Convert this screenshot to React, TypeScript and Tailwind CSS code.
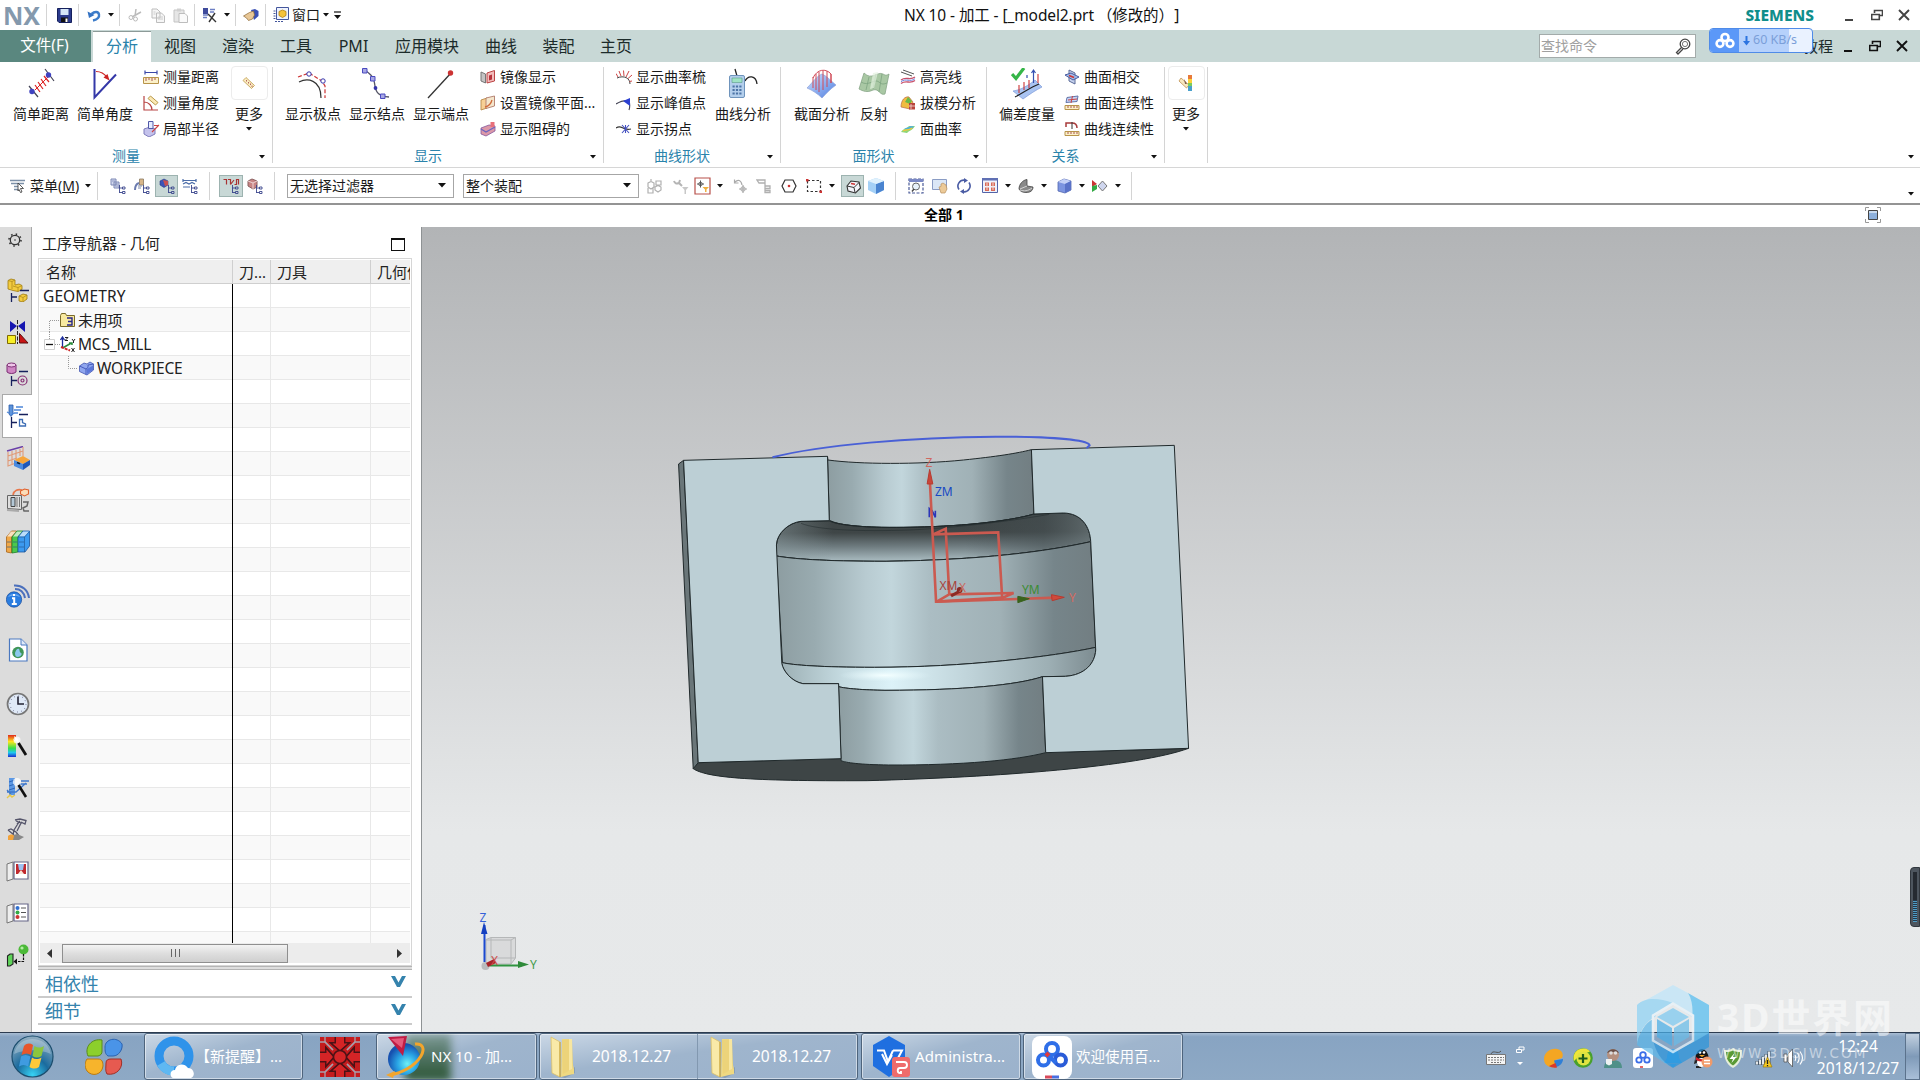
import type { ReactNode } from "react";

interface IconProps {
  w?: number;
  h?: number;
  box?: string;
  children: ReactNode;
}

const Svg = ({ w = 16, h = 16, box, children }: IconProps) => (
  <svg width={w} height={h} viewBox={box ?? `0 0 ${w} ${h}`} fill="none" className="shrink-0">
    {children}
  </svg>
);

const Caret = ({ className = "" }: { className?: string }) => (
  <svg width="6" height="4" viewBox="0 0 6 4" className={`shrink-0 ${className}`}>
    <path d="M0 0h6L3 3.5z" fill="#111" />
  </svg>
);

const Sep = ({ className = "" }: { className?: string }) => (
  <div className={`w-px shrink-0 bg-[#d4d4d4] ${className}`} />
);

/* ---------- title bar ---------- */

const Restore = ({ color }: { color: string }) => (
  <Svg w={12} h={12}>
    <path d="M3.5 4V1.5h8v5H9M3 1.5h9M.7 5.5h7.6v5H.7zM0 5.5h9" stroke={color} strokeWidth="1.6" />
  </Svg>
);

const Close = ({ color }: { color: string }) => (
  <Svg w={12} h={12}>
    <path d="M1 1l10 10M11 1L1 11" stroke={color} strokeWidth="1.9" />
  </Svg>
);

const TitleBar = () => (
  <div className="flex h-[30px] items-center bg-white">
    <div className="w-[46px] pl-[3px] text-[25px] font-bold leading-[34px] text-[#8499ad]">NX</div>
    <Sep className="h-[22px]" />
    <div className="ml-[10px] flex">
      <Svg w={15} h={15}>
        <path d="M.5 .5h14v14H2l-1.500-1.500z" fill="#2b3a8c" stroke="#15205c" />
        <path d="M3.500 1h8v6h-8z" fill="#d6e6f7" />
        <path d="M4 9.500h7V14H4z" fill="#111" />
        <path d="M8.500 10.500h2V14h-2z" fill="#fff" />
      </Svg>
    </div>
    <Sep className="ml-[6px] h-[22px]" />
    <div className="ml-[8px] flex">
      <Svg w={14} h={14}>
        <path d="M6 12.500c5-1 6.500-3.500 6-6C11.400 3.500 8 3 4.500 6" stroke="#3d7cc9" strokeWidth="2.400" />
        <path d="M.5 3.500L2 10l5.500-3z" fill="#3573c4" />
      </Svg>
    </div>
    <Caret className="ml-[7px]" />
    <Sep className="ml-[5px] h-[22px]" />
    <div className="ml-[8px] flex">
      <Svg w={14} h={14}>
        <path d="M8 1L7 8M13 4L4 9" stroke="#bbb" strokeWidth="1.500" />
        <circle cx="3" cy="9.500" r="2" stroke="#bbb" />
        <circle cx="7.500" cy="11" r="2" stroke="#bbb" />
      </Svg>
    </div>
    <div className="ml-[9px] flex">
      <Svg w={14} h={15}>
        <path d="M1 1h5l3 3v6H1zM5.500 5h5l3 3v6.500h-8z" fill="#f6f6f6" stroke="#bdbdbd" />
        <path d="M7 9h5M7 11h5M2.500 4h2M2.500 6h2" stroke="#ccc" />
      </Svg>
    </div>
    <div className="ml-[8px] flex">
      <Svg w={15} h={15}>
        <path d="M1 2h10v12H1z" fill="#e6e6e6" stroke="#c4c4c4" />
        <path d="M4 .5h4v3H4z" fill="#d0d0d0" />
        <path d="M6 5.500h6l2.500 2.500v6.500H6z" fill="#fafafa" stroke="#bdbdbd" />
      </Svg>
    </div>
    <Sep className="ml-[6px] h-[22px]" />
    <div className="ml-[7px] flex">
      <Svg w={16} h={16}>
        <path d="M1 1h5v6H1z" fill="#3f4b9c" />
        <path d="M1 8h5M1 10.500h4M8 2.500h5M8 5h4" stroke="#6d7fc4" strokeWidth="1.500" />
        <path d="M6 7l8 8M13 6l-6 9" stroke="#333" strokeWidth="1.400" />
      </Svg>
    </div>
    <Caret className="ml-[6px]" />
    <Sep className="ml-[5px] h-[22px]" />
    <div className="ml-[7px] flex">
      <Svg w={16} h={14}>
        <path d="M8 2l4-1 3.500 2v5L11 12z" fill="#3a50b4" />
        <path d="M.5 8l6-3.500 4-1.500 1 4-2 4-4 1.500-2-2.500z" fill="#e8c796" stroke="#8a6430" strokeWidth=".7" />
      </Svg>
    </div>
    <Sep className="ml-[6px] h-[22px]" />
    <div className="ml-[7px] flex">
      <Svg w={16} h={16}>
        <path d="M3.500.500h12v12h-12z" fill="#eef3ff" stroke="#44569c" />
        <path d="M.5 4h2M.5 6.500h2M.5 9h2M.5 11.500h2M2 14.500h9" stroke="#44569c" strokeDasharray="2 1" />
        <path d="M6 4.500l3.500-1.500 3.500 1.500v4L9.500 10.500 6 8.500z" fill="#f5c33b" stroke="#b37d0a" strokeWidth=".8" />
      </Svg>
    </div>
    <span className="ml-[3px] text-[14px] leading-[30px]">窗口</span>
    <Caret className="ml-[3px]" />
    <Svg w={16} h={10}>
      <path d="M5 2h7" stroke="#111" strokeWidth="1.200" />
      <path d="M5 5h7L8.500 9z" fill="#111" />
    </Svg>
    <div className="ml-[559px] w-[600px] whitespace-nowrap text-[15.5px] leading-[30px] tracking-[-0.1px] text-[#111]">
      NX 10 - 加工 - [_model2.prt<span className="pl-[3px] pr-[8px]">（修改的）</span>]
    </div>
    <div className="ml-auto flex items-center pr-[10px]">
      <span className="text-[15.5px] font-extrabold leading-[30px] text-[#0f8e8b]">SIEMENS</span>
      <div className="ml-[31px] mt-[10px] h-[2px] w-[8px] bg-[#444]" />
      <div className="ml-[18px] flex">
        <Restore color="#444" />
      </div>
      <div className="ml-[15px] flex">
        <Close color="#444" />
      </div>
    </div>
  </div>
);

/* ---------- tabs ---------- */

const tabs = [
  { label: "视图", cls: "w-[58px]" },
  { label: "渲染", cls: "w-[58px]" },
  { label: "工具", cls: "w-[58px]" },
  { label: "PMI", cls: "w-[57px]" },
  { label: "应用模块", cls: "w-[90px]" },
  { label: "曲线", cls: "w-[58px]" },
  { label: "装配", cls: "w-[57px]" },
  { label: "主页", cls: "w-[58px]" },
];

const Cloud = ({ size = 20, color = "#fff" }: { size?: number; color?: string }) => (
  <Svg w={size} h={size} box="0 0 20 20">
    <g stroke={color} strokeWidth="2.600">
      <circle cx="10" cy="6.500" r="3.500" />
      <circle cx="5" cy="12.500" r="3.400" />
      <circle cx="15" cy="12.500" r="3.400" />
    </g>
  </Svg>
);

const TabBar = () => (
  <div className="relative flex h-8 bg-[#c8d8d6] text-[16px] leading-[32px] text-[#1c2b2a]">
    <div className="w-[91px] bg-[#5a877f] pr-[2px] text-center text-[15.5px] leading-[30px] text-white">文件(F)</div>
    <div className="ml-[2px] mt-px w-[58px] border-t border-[#8c9a98] bg-white text-center leading-[29px] text-[#2a83ab]">分析</div>
    {tabs.map((t) => (
      <div key={t.label} className={`${t.cls} text-center`}>
        {t.label}
      </div>
    ))}
    <div className="ml-auto flex items-center pr-[12px]">
      <div className="flex h-6 w-[157px] items-center justify-between border border-[#a3abaa] bg-white pl-[1px] pr-1 text-[14px] text-[#a0a0a0]">
        查找命令
        <Svg w={16} h={17}>
          <circle cx="10" cy="6" r="4.800" stroke="#444" strokeWidth="1.300" />
          <circle cx="10" cy="6" r="2.600" stroke="#777" />
          <path d="M6.500 9.500l-5 5 1.500 1.500 5-5" stroke="#444" strokeWidth="1.300" />
        </Svg>
      </div>
      <span className="ml-[107px] text-[15px]">教程</span>
      <div className="ml-[11px] mt-[10px] h-[2px] w-[8px] bg-[#111]" />
      <div className="ml-[17px] flex">
        <Restore color="#111" />
      </div>
      <div className="ml-[15px] flex">
        <Close color="#111" />
      </div>
    </div>
    {/* floating download speed widget */}
    <div className="absolute right-[107px] top-[-2px] flex h-[25px] w-[104px] overflow-hidden rounded border border-[#4f8be8] bg-[#eaf2ff]">
      <div className="flex w-[29px] items-center justify-center bg-[#5b98f8]">
        <Cloud />
      </div>
      <div className="flex w-[50px] items-center bg-[#b6d1fb] pl-[4px]">
        <Svg w={7} h={10}>
          <path d="M3.500 0v6" stroke="#2c74e0" strokeWidth="2" />
          <path d="M0 5h7L3.500 9.500z" fill="#2c74e0" />
        </Svg>
        <span className="ml-[3px] whitespace-nowrap pb-[2px] text-[12.5px] leading-[20px] text-[#7b9fd9]">60 KB/s</span>
      </div>
    </div>
  </div>
);

/* ---------- ribbon icons ---------- */

const IDistance = (
  <Svg w={32} h={32}>
    <path d="M4 18l9 11M20 1l9 12" stroke="#445" strokeWidth="1.200" />
    <path d="M10 22L23 9" stroke="#d22" strokeWidth="1" />
    <path d="M10 17l5 7M13 14l5 7M16 11l5 7M19 8l5 6" stroke="#d22" strokeWidth="1.200" />
    <circle cx="7" cy="23.500" r="2.700" fill="#4043c0" />
    <circle cx="23.500" cy="7" r="2.700" fill="#4043c0" />
  </Svg>
);
const IAngle = (
  <Svg w={32} h={32}>
    <path d="M5.500 1v28.500L27 6.500" stroke="#3438a8" strokeWidth="2" />
    <path d="M7 3.500c5 0 9 3 11 6" stroke="#c22" strokeWidth="1.200" />
    <path d="M20.500 12.500l-6-3 4-3.500z" fill="#c22" />
  </Svg>
);
const IPole = (
  <Svg w={32} h={32}>
    <path d="M2 14c8-4 22-3 22 16" stroke="#333" strokeWidth="1.200" />
    <path d="M1 9L12 5l13 8 3 5v12" stroke="#c33" strokeWidth="1.200" strokeDasharray="4 2" />
    <circle cx="12" cy="6" r="2.200" fill="#fff" stroke="#33a" />
    <circle cx="26" cy="13" r="2.200" fill="#fff" stroke="#33a" />
  </Svg>
);
const IKnot = (
  <Svg w={32} h={32}>
    <path d="M3 2c8 4 10 8 11 16 1 7 4 10 14 11" stroke="#556" strokeWidth="1.300" />
    <g stroke="#4a4ac0" fill="#a8a8e4">
      <path d="M1.500 .5h4.500v4.500H1.500zM9.500 8.500h4.500v4.500H9.500zM19.500 26h4.500v4.500h-4.500z" />
    </g>
    <circle cx="14.500" cy="20" r="1.900" fill="#33a" />
  </Svg>
);
const IEnd = (
  <Svg w={32} h={32}>
    <path d="M3 30L26 5" stroke="#333" strokeWidth="1.300" />
    <circle cx="25.500" cy="5" r="2.700" fill="#c33" />
  </Svg>
);
const ICalc = (
  <Svg w={32} h={32}>
    <path d="M10 8L8 1M18 13c3-6 11-6 12 3" stroke="#222" strokeWidth="1.300" />
    <rect x="2.500" y="7.500" width="15" height="22" rx="1.500" fill="#b4cfec" stroke="#6f94bc" />
    <path d="M5 10h10v4.500H5z" fill="#a0e4c4" stroke="#5a9a8a" strokeWidth=".6" />
    <path d="M5.500 18.500h9M5.500 22h9M5.500 25.500h9" stroke="#4c74a6" strokeWidth="1.800" strokeDasharray="2.200 1.200" />
  </Svg>
);
const ISection = (
  <Svg w={32} h={32}>
    <defs>
      <linearGradient id="sec" x1="0" y1="0" x2="1" y2="1">
        <stop offset="0" stopColor="#cfe0ff" />
        <stop offset="1" stopColor="#4f7ee0" />
      </linearGradient>
    </defs>
    <path d="M1 20C7 14 11 8 16 6c5 2 10 8 14 11-6 4-10 9-14 13-4-4-10-8-15-10z" fill="url(#sec)" stroke="#8ea2d8" strokeWidth=".7" />
    <path d="M7 20V9M10 22V6M13 24V4M17 22V3M21 19V3M25 15V6M7 10C11 1 20 0 25 6v9" stroke="#d04a58" strokeWidth="1" />
  </Svg>
);
const IReflect = (
  <Svg w={32} h={30}>
    <path d="M1 20L6 4c8 8 13-2 19 1 2 1 3 2 6 0l-4 20c-5 2-6-6-12-4-6 3-10 1-14-1z" fill="#a9c8a4" stroke="#88a688" strokeWidth=".8" />
    <path d="M3 13c8 5 13-4 18 0 3 3 5 2 8 1M11 8L8 21M18 5l-3 15M24 5l-3 18" stroke="#7ea482" strokeWidth=".8" />
    <path d="M15 4l5-1-4 16-4 1z" fill="#e4f2e0" opacity=".7" />
  </Svg>
);
const IDeviation = (
  <Svg w={32} h={32}>
    <path d="M2 23c8-1 16-6 22-11l7 7c-6 3-12 7-19 12z" fill="#a9c4f2" stroke="#7d99d8" strokeWidth=".7" />
    <path d="M4 29c8-4 16-10 24-13" stroke="#222" strokeWidth="1.200" />
    <path d="M8 17v8M13 14v8M18 12v8M27 6v9" stroke="#c33" strokeWidth="1.100" />
    <path d="M22.500 15V2M16 10V7M20.500 5l2-3 2 3" stroke="#3550b0" strokeWidth="1.200" />
    <path d="M1 6l4 4.500L13 0" stroke="#35b648" strokeWidth="3.200" />
  </Svg>
);
const IRuler = (
  <Svg w={14} h={14}>
    <path d="M4 1.500l8.500 8-3 3L1 4.500z" fill="#fbecc0" stroke="#c4a45a" strokeWidth=".9" />
    <path d="M4.500 4v1.500M6.500 6v1.500M8.500 7.500V9M10 9.500V11" stroke="#a55" strokeWidth=".9" />
  </Svg>
);
const IRulerColor = (
  <Svg w={16} h={18}>
    <path d="M3 4l8 7-2.500 3L1 7z" fill="#f8e8c0" stroke="#c09050" strokeWidth=".8" />
    <path d="M10 1h4v4h-4z" fill="#e87a3a" />
    <path d="M10 5h4v4h-4z" fill="#fcd23a" />
    <path d="M10 9h4v3h-4z" fill="#7ccc5c" />
    <path d="M10 12h4v5h-4z" fill="#48a0cc" />
    <path d="M6 5l3 5-2 0z" fill="#7a5a48" />
  </Svg>
);

const SRulerH = (
  <Svg>
    <path d="M2 1.500v4M14 1.500v4M2 3.500h12" stroke="#3a48a8" strokeWidth="1.200" />
    <path d="M.5 8.500h15v6H.5z" fill="#fbf0c8" stroke="#b8944a" />
    <path d="M3 9v3M6 9v2M9 9v3M12 9v2" stroke="#a55" />
  </Svg>
);
const SRulerA = (
  <Svg>
    <path d="M1 1v14h14M1 7c5 0 8 4 8 8" stroke="#b84444" strokeWidth="1.200" />
    <path d="M7.500 1l7.500 6.500-2.500 2.500L5 3.500z" fill="#fbe8b4" stroke="#b8984a" />
  </Svg>
);
const SRadius = (
  <Svg w={17}>
    <path d="M1 8l6-2 5 2v5l-6 3-5-3z" fill="#c4c2ec" stroke="#7f7cbc" />
    <path d="M5.500 .5h4.500v7H5.500z" fill="#e6ecff" stroke="#5058a8" />
    <path d="M16 4L9 11M11 4.500h5" stroke="#c44" strokeWidth="1.100" />
  </Svg>
);
const SMirror = (
  <Svg>
    <path d="M1 3l4.500 2v9L1 12z" fill="#c4c4c4" stroke="#777" />
    <path d="M7 4l7.500-2.500v10.500L7 14z" fill="#f3bcbc" stroke="#b44" />
    <path d="M9 6.500l3-1v5l-3 1z" fill="#b8343c" />
  </Svg>
);
const SPlane = (
  <Svg>
    <path d="M1 5l6-2v10l-6 2z" fill="#f7cf94" stroke="#b88a4a" strokeWidth=".9" />
    <path d="M6 3l8.500-2v10L6 13.500z" fill="#f4e6cc" stroke="#b07a6a" strokeWidth=".9" />
    <path d="M5 12c4-1 6-3 7-7" stroke="#d06a3a" strokeWidth="1.300" />
  </Svg>
);
const SBlock = (
  <Svg>
    <path d="M1 7l8-3 6 1v5l-9 5-5-2z" fill="#dc98a8" stroke="#84589c" strokeWidth=".8" />
    <path d="M1 8l5 3 9-5" stroke="#6a64c0" strokeWidth="1.300" />
    <path d="M10.500 1h4v5h-4z" fill="#e8707a" />
  </Svg>
);
const SComb = (
  <Svg>
    <path d="M1 9c7-3 13 0 13 6" stroke="#444" />
    <path d="M2 8L0 4.500M5 7L3 2M8 7L7.500 1.500M10 8l3-6M12 9.500l4-3.500M13.500 12.500L16 12" stroke="#c44" />
  </Svg>
);
const SPeak = (
  <Svg>
    <path d="M0 9c5-3 9-4 13-3 1 3 1 6 0 9" stroke="#445" strokeWidth="1.100" />
    <path d="M7 6l7-3v8z" fill="#2b3fd0" />
  </Svg>
);
const SInflect = (
  <Svg>
    <path d="M0 7c6-4 6 3 15 1" stroke="#333" strokeWidth="1.200" />
    <path d="M6 4l7 8M13 4l-7 8M9.500 4v8" stroke="#4450c0" strokeWidth="1.100" />
  </Svg>
);
const SHighlight = (
  <Svg>
    <path d="M3 1l11 4M1 3l11 4" stroke="#555" />
    <path d="M1 11c5-4 9 1 14-3M1 14.500c5-4 9 1 14-3" stroke="#c8506a" strokeWidth="1.300" />
    <path d="M1 12.700c5-4 9 1 14-3" stroke="#6a80dc" />
  </Svg>
);
const SDraft = (
  <Svg>
    <path d="M1 12C1 5 5 1 9 2l4 5-3 7z" fill="#f0bc40" stroke="#b86a4a" strokeWidth=".7" />
    <path d="M8 2l4 4-2 3-5-2z" fill="#6ab84a" />
    <path d="M9 8h6v6.500H9z" fill="#b8443c" />
    <path d="M11 9v5M9 11h6" stroke="#f4dcd4" strokeWidth=".8" />
  </Svg>
);
const SCurv = (
  <Svg>
    <path d="M1 11c3-4 5-3 8-6l6 0c-3 5-5 4-8 7z" fill="#8cd67a" />
    <path d="M4 8c3-2 4-1 7-3l3 .500-3 2.500z" fill="#52b0d8" />
    <path d="M3 10c4-2 5 0 9-3" stroke="#f2c83c" strokeWidth="1.300" />
  </Svg>
);
const SIntersect = (
  <Svg>
    <path d="M5 1l6 3v11l-6-3z" fill="#c7d3ee" stroke="#5a6a98" />
    <path d="M1 6l6-2 8 4-6 3z" fill="#9ab8ea" fillOpacity=".8" stroke="#4a5ca0" />
    <path d="M5 6.500l5 2" stroke="#c33" strokeWidth="1.500" />
  </Svg>
);
const SCont = (
  <Svg>
    <path d="M3 2.500L14 1l-1 5.500-11 1z" fill="#c4d4f6" stroke="#6474a8" />
    <path d="M8.500 1L7 8M4 5l9-1" stroke="#c44" />
    <path d="M1 10.500h14v4H1z" fill="#fbf0c8" stroke="#b8944a" />
    <path d="M4 11v2M7 11v2M10 11v2M13 11v2" stroke="#a55" />
  </Svg>
);
const SCurveCont = (
  <Svg>
    <path d="M2 6V2h6M8 2c4 0 5 2 5 5" stroke="#a83a3a" strokeWidth="1.500" />
    <path d="M8 1v7" stroke="#333" />
    <path d="M1 10.500h14v4H1z" fill="#fbf0c8" stroke="#b8944a" />
    <path d="M4 11v2M7 11v2M10 11v2M13 11v2" stroke="#a55" />
  </Svg>
);

/* ---------- ribbon ---------- */

const Big = ({ icon, label, cls = "w-16" }: { icon: ReactNode; label: string; cls?: string }) => (
  <div className={`${cls} flex shrink-0 flex-col items-center pt-[5px]`}>
    <div className="flex h-[33px] items-center">{icon}</div>
    <span className="mt-1 whitespace-nowrap leading-5">{label}</span>
  </div>
);

const SmallList = ({ items, cls }: { items: [ReactNode, string][]; cls: string }) => (
  <div className={`${cls} flex shrink-0 flex-col pt-px`}>
    {items.map(([icon, label]) => (
      <div key={label} className="flex h-[26px] items-center gap-1 whitespace-nowrap">
        <div className="flex w-4 justify-center pt-px">{icon}</div>
        {label}
      </div>
    ))}
  </div>
);

const More = ({ icon, cls }: { icon: ReactNode; cls: string }) => (
  <div className={`${cls} flex shrink-0 flex-col items-center pt-[4px]`}>
    <div className="flex h-[34px] w-[37px] items-center justify-center rounded-sm border border-[#ececec]">{icon}</div>
    <span className="mt-[4px] leading-5">更多</span>
    <Caret className="mt-[3px]" />
  </div>
);

const Group = ({ title, cls, children }: { title?: string; cls: string; children: ReactNode }) => (
  <div className={`${cls} flex shrink-0`}>
    <div className="flex min-w-0 flex-1 flex-col">
      <div className="flex h-[84px]">{children}</div>
      {title && (
        <div className="flex h-[22px] items-center">
          <span className="flex-1 text-center leading-[24px] text-[#2a83ab]">{title}</span>
          <div className="flex w-5 justify-center pt-0.5">
            <Caret />
          </div>
        </div>
      )}
    </div>
    <Sep className="mt-[5px] h-24" />
  </div>
);

const Ribbon = () => (
  <div className="flex h-[106px] border-b border-[#d6d6d6] bg-white text-[14px] text-[#1a1a1a]">
    <Group title="测量" cls="w-[273px]">
      <div className="w-[9px] shrink-0" />
      <Big icon={IDistance} label="简单距离" />
      <Big icon={IAngle} label="简单角度" />
      <SmallList
        cls="w-[93px] pl-1.5"
        items={[
          [SRulerH, "测量距离"],
          [SRulerA, "测量角度"],
          [SRadius, "局部半径"],
        ]}
      />
      <More icon={IRuler} cls="w-[38px]" />
    </Group>
    <Group title="显示" cls="w-[331px]">
      <div className="w-2 shrink-0" />
      <Big icon={IPole} label="显示极点" />
      <Big icon={IKnot} label="显示结点" />
      <Big icon={IEnd} label="显示端点" />
      <SmallList
        cls="pl-[7px]"
        items={[
          [SMirror, "镜像显示"],
          [SPlane, "设置镜像平面..."],
          [SBlock, "显示阻碍的"],
        ]}
      />
    </Group>
    <Group title="曲线形状" cls="w-[177px]">
      <SmallList
        cls="w-[107px] pl-[12px]"
        items={[
          [SComb, "显示曲率梳"],
          [SPeak, "显示峰值点"],
          [SInflect, "显示拐点"],
        ]}
      />
      <Big icon={ICalc} label="曲线分析" />
    </Group>
    <Group title="面形状" cls="w-[206px]">
      <div className="w-[9px] shrink-0" />
      <Big icon={ISection} label="截面分析" />
      <Big icon={IReflect} label="反射" cls="w-10" />
      <SmallList
        cls="pl-1.5"
        items={[
          [SHighlight, "高亮线"],
          [SDraft, "拔模分析"],
          [SCurv, "面曲率"],
        ]}
      />
    </Group>
    <Group title="关系" cls="w-[178px]">
      <div className="w-2 shrink-0" />
      <Big icon={IDeviation} label="偏差度量" />
      <SmallList
        cls="pl-[5px]"
        items={[
          [SIntersect, "曲面相交"],
          [SCont, "曲面连续性"],
          [SCurveCont, "曲线连续性"],
        ]}
      />
    </Group>
    <Group cls="w-[43px]">
      <More icon={IRulerColor} cls="w-[42px]" />
    </Group>
    <div className="flex flex-1 items-end justify-end pb-[8px] pr-[6px]">
      <Caret />
    </div>
  </div>
);

/* ---------- selection toolbar ---------- */

const Tree = () => (
  <path
    d="M10.500 8v8M10.500 11h3M10.500 15.500h3M13.500 10h2.500v2h-2.500zM13.500 14.500h2.500v2h-2.500z"
    stroke="#3a458c"
    strokeWidth=".9"
  />
);

const Tool = ({ cls, active, children }: { cls: string; active?: boolean; children: ReactNode }) => (
  <div
    className={`${cls} flex h-[22px] shrink-0 items-center justify-center ${active ? "border border-[#9db3b0] bg-[#c8d8d6]" : ""}`}
  >
    {children}
  </div>
);

const Combo = ({ cls, label }: { cls: string; label: string }) => (
  <div className={`${cls} flex h-[24px] shrink-0 items-center justify-between border border-[#a6a6a6] bg-white pl-[2px] pr-[7px]`}>
    {label}
    <svg width="8" height="5" viewBox="0 0 8 5">
      <path d="M0 0h8L4 4.500z" fill="#111" />
    </svg>
  </div>
);

const Toolbar = () => (
  <div className="flex h-[37px] items-center border-b-2 border-[#949494] bg-white text-[14px] text-[#1a1a1a]">
    <div className="ml-[10px] flex">
      <Svg>
        <path d="M0 2.500h15M1 5.500h13M4 8.500h7M4 11.500h5" stroke="#7c90a8" strokeWidth="1.600" />
        <path d="M8 5l5.500 5.500h-3l1.500 3.500-1.500.5L9 11.500 8 13z" fill="#fff" stroke="#333" strokeWidth=".8" />
      </Svg>
    </div>
    <span className="ml-[4px] w-[53px] whitespace-nowrap">
      菜单(<u>M</u>)
    </span>
    <Caret className="ml-[2px]" />
    <Sep className="ml-[6px] h-7" />
    <Tool cls="ml-[8px] w-6">
      <Svg w={18} h={18}>
        <path d="M2 2h5v6H2zM5 5h5v6H5z" fill="#d2d8ee" stroke="#7c88b4" />
        <path d="M3 4h3M6 7h3M6 9h3" stroke="#7c88b4" strokeWidth=".8" />
        <Tree />
      </Svg>
    </Tool>
    <Tool cls="w-6">
      <Svg w={18} h={18}>
        <path d="M2 13c0-4 1-6 4-7" stroke="#6c7cb0" strokeWidth="2" />
        <path d="M6.500 2h4v6h-4z" fill="#d8b68a" stroke="#8a7860" strokeWidth=".8" />
        <path d="M5 9h4M5 11h3" stroke="#7a86a8" />
        <Tree />
      </Svg>
    </Tool>
    <Tool active cls="ml-px w-[23px]">
      <Svg w={18} h={18}>
        <path d="M2 4l4-2 4 2v4l-4 2.500L2 8z" fill="#3c54b8" stroke="#2a3880" strokeWidth=".6" />
        <path d="M5 3l5 1v4l-3 1z" fill="#c85050" />
        <Tree />
      </Svg>
    </Tool>
    <Tool cls="w-6">
      <Svg w={18} h={18}>
        <path d="M2 2v3M15 2v3M2 3.500h13M2 7l3-1.500L8 7l3-1.500L14 7M2 10h7" stroke="#4a6ca8" strokeWidth="1.200" />
        <Tree />
      </Svg>
    </Tool>
    <Sep className="ml-[7px] h-7" />
    <Tool active cls="ml-[9px] w-[24px]">
      <Svg w={18} h={18}>
        <path d="M1.500 2.500h3v5M6 2.500h2.500v5M8.500 7.500L12 3M12.500 7.500h2v-5h2v5" stroke="#a83232" strokeWidth="1.200" />
        <Tree />
      </Svg>
    </Tool>
    <Tool cls="w-6">
      <Svg w={18} h={18}>
        <path d="M2 4l4-2 5 2v6l-4 2-5-3z" fill="#c88484" stroke="#8a6060" />
        <path d="M2 4l5 2 4-2M7 6v6" stroke="#eed4d4" />
        <Tree />
      </Svg>
    </Tool>
    <Sep className="ml-[7px] h-7" />
    <Combo cls="ml-[12px] w-[167px]" label="无选择过滤器" />
    <Combo cls="ml-[9px] w-[176px]" label="整个装配" />
    <Tool cls="ml-[6px] w-[20px]">
      <Svg w={18} h={16}>
        <path d="M2 5l3-1.500L8 5v4L5 11 2 9zM2 10v5h5v-5M5 3.500V1M10 3h5v4h-5zM9 9l3-1.500L15 9v3l-3 2-3-2z" stroke="#b0b0b0" strokeWidth="1.200" />
      </Svg>
    </Tool>
    <Tool cls="ml-[6px] w-[20px]">
      <Svg w={16} h={16}>
        <path d="M1 3c1 3 3 3 5 2l3 3M6 5l1-3" stroke="#b4b4b4" strokeWidth="2" />
        <path d="M9 9h6.500l-2.500 3v4h-1.500v-4z" fill="#c8c8c8" />
      </Svg>
    </Tool>
    <Tool cls="ml-[3px] w-[17px]">
      <Svg w={17} h={18}>
        <path d="M1 1h15v16H1z" stroke="#b8504a" strokeWidth="1.200" />
        <path d="M3 7h7M6.500 3.500v7" stroke="#555" />
        <circle cx="6.500" cy="7" r="1.800" stroke="#555" strokeWidth=".8" />
        <path d="M8.500 10h6.500l-2.500 2.500v2.500h-1.500v-2.500z" fill="#f0b040" />
      </Svg>
    </Tool>
    <Caret className="ml-[6px]" />
    <Tool cls="ml-[8px] w-[20px]">
      <Svg w={16} h={16}>
        <path d="M2 4c3-3 6-2 7 3M1.500 1.500v3.500h4M10 7v8M6 11h8" stroke="#a9a9a9" strokeWidth="1.200" />
        <circle cx="10" cy="11" r="2.200" stroke="#a9a9a9" />
      </Svg>
    </Tool>
    <Tool cls="ml-[3px] w-[20px]">
      <Svg w={16} h={16}>
        <path d="M1 2h8v3H3zM9 5v10M9 8h5v2.500H9zM9 12.500h5v2H9z" stroke="#b0b0b0" strokeWidth="1.300" />
      </Svg>
    </Tool>
    <Tool cls="ml-[6px] w-[18px]">
      <Svg w={16} h={14}>
        <path d="M4 1h8l3 6-3 6H4L1 7z" stroke="#333" strokeWidth="1.200" />
        <circle cx="8" cy="7" r="1.300" fill="#c33" />
      </Svg>
    </Tool>
    <Tool cls="ml-[7px] w-[18px]">
      <Svg w={16} h={14}>
        <path d="M1.500 1.500h13v11h-13z" stroke="#333" strokeWidth="1.200" strokeDasharray="2.500 2" />
        <path d="M0 0h2.500v2.500H0zM13.500 11.500h2.500V14h-2.500z" fill="#c33" />
      </Svg>
    </Tool>
    <Caret className="ml-[6px]" />
    <Tool active cls="ml-[6px] w-[23px]">
      <Svg w={18} h={18}>
        <path d="M3 9l4-5 8 1 1.500 6-5 5L4 14z" fill="#f4f4fa" stroke="#333" strokeWidth="1.100" />
        <path d="M3 9l7 1.500 5-5M10 10.500l1 5" stroke="#333" />
        <path d="M7 6.500l4 .8" stroke="#c33" strokeWidth="1.500" />
      </Svg>
    </Tool>
    <Tool cls="ml-[2px] w-[20px]">
      <Svg w={16} h={17}>
        <path d="M0 4l8-3 8 3v9l-8 4-8-4z" fill="#a4d0f6" />
        <path d="M8 7l8-3v9l-8 4z" fill="#4a84d0" />
        <path d="M0 4l8-3 8 3-8 3z" fill="#e0f1fc" />
      </Svg>
    </Tool>
    <Sep className="ml-[9px] h-7" />
    <Tool cls="ml-[11px] w-[18px]">
      <Svg w={16} h={16}>
        <path d="M1 1h14v14H1z" stroke="#4a5a98" strokeDasharray="3 1.500" strokeWidth="1.200" />
        <path d="M1 1h14v3H1z" fill="#7a88c4" />
        <circle cx="8" cy="8.500" r="3.500" fill="#e8f2fa" stroke="#666" />
        <path d="M4 13.500l2-2.500" stroke="#444" strokeWidth="1.400" />
      </Svg>
    </Tool>
    <Tool cls="ml-[6px] w-[18px]">
      <Svg w={16} h={16}>
        <path d="M.5 1.500h14v10H.5z" fill="#dbe7f6" stroke="#8a9cc4" />
        <path d="M7 9l2-.500V6l2-1 3 2 1 4-2 4-4 0z" fill="#ecca98" stroke="#b89060" strokeWidth=".7" />
      </Svg>
    </Tool>
    <Tool cls="ml-[6px] w-[18px]">
      <Svg w={16} h={16}>
        <path d="M3 11.500A6 6 0 019 2.200M13 4.500A6 6 0 017 13.800" stroke="#4a5ca4" strokeWidth="1.600" />
        <path d="M8 0l4 2.500-4 2.500zM8 11l-4 2.500 4 2.500z" fill="#4a5ca4" />
      </Svg>
    </Tool>
    <Tool cls="ml-[8px] w-[18px]">
      <Svg w={16} h={15}>
        <path d="M.5.5h15v14H.5z" fill="#eef2fc" stroke="#5464a8" />
        <path d="M0 0h16v2.500H0z" fill="#6070b4" />
        <path d="M3 4.500h4v3.500H3zM9 4.500h4v3.500H9zM3 9.500h4V13H3zM9 9.500h4V13H9z" fill="#d86a58" />
        <path d="M5 5v7M11 5v7" stroke="#f4dcd4" />
      </Svg>
    </Tool>
    <Caret className="ml-[6px]" />
    <Tool cls="ml-[6px] w-[18px]">
      <Svg w={16} h={16}>
        <path d="M1 11c0-5 4-9 8-9.500V8l6 1c0 4-3 5.500-7 5.500S2 13 1 11z" fill="#8a8a8a" stroke="#444" strokeWidth=".8" />
        <path d="M2 12c4 1.500 8 1 12-2M9 8l-7 3" stroke="#ddd" strokeWidth=".9" />
      </Svg>
    </Tool>
    <Caret className="ml-[6px]" />
    <Tool cls="ml-[8px] w-[18px]">
      <Svg w={15} h={16}>
        <path d="M1 4l6-3 7 2v9l-6 3-7-2z" fill="#7c94e0" stroke="#5468b0" strokeWidth=".8" />
        <path d="M1 4l6-3 7 2-6 3z" fill="#c4d0f6" />
        <path d="M8 6l6-3v9l-6 3z" fill="#5a72c8" />
      </Svg>
    </Tool>
    <Caret className="ml-[6px]" />
    <Tool cls="ml-[4px] w-[20px]">
      <Svg w={17} h={14}>
        <path d="M1 1l5 4-5 3z" fill="#c33" />
        <path d="M1 7l5-1v4l-5 3z" fill="#3a4" />
        <path d="M7 7l4.500-5 4.500 5-4.500 5z" fill="#cfd6ee" stroke="#777" />
      </Svg>
    </Tool>
    <Caret className="ml-[6px]" />
    <Sep className="ml-[10px] h-7" />
    <div className="flex flex-1 items-end justify-end self-stretch pb-[7px] pr-[6px]">
      <Caret />
    </div>
  </div>
);

const PartBar = () => (
  <div className="flex h-[22px] bg-white">
    <div className="flex-1 pl-[924px] text-[14px] font-bold leading-[20px] text-black">全部 1</div>
    <div className="mr-[39px] mt-[2px] flex">
      <Svg>
        <path d="M.5 4V.5H4M12 .5h3.500V4M15.500 12v3.500H12M4 15.500H.5V12" stroke="#999" />
        <path d="M3.500 3.500h9v9h-9z" fill="#8db0dc" stroke="#444" />
        <path d="M4 5h8" stroke="#dde8f6" strokeWidth="1.500" />
      </Svg>
    </div>
  </div>
);

/* ---------- resource bar ---------- */

const sideIcons: { id: string; gap?: string; active?: boolean; art: ReactNode }[] = [
  {
    id: "assembly",
    art: (
      <>
        <path d="M2 2.500L5 1l4 1v5l4-1 3 1.500v4L12 13.500l-5-1-5-1.500z" fill="#f3cc3f" stroke="#9d7a10" strokeWidth=".8" />
        <path d="M2 2.500l4 1L9 2M6 3.500V11M7 8l5 1.500 4-2M12 9.500v4" stroke="#b08c1c" strokeWidth=".8" />
        <path d="M5.500 15v9M6 19h5M14 12.500h9" stroke="#16205c" strokeWidth="1.300" />
        <path d="M13 18l4-2 4 1v4l-4 3-4-1z" fill="#f3cc3f" stroke="#9d7a10" strokeWidth=".8" />
        <path d="M13 18l4 1.500 4-2.500M17 19.500V24" stroke="#b08c1c" strokeWidth=".8" />
      </>
    ),
  },
  {
    id: "constraint",
    art: (
      <>
        <path d="M4 1l7 5-7 6zM19 1l-7 5 7 6z" fill="#1616b0" />
        <path d="M11.500 0v24" stroke="#222" strokeDasharray="4 1.500" />
        <path d="M1.500 15.500h8v8h-8z" fill="#f7ef27" stroke="#806a00" />
        <path d="M13.500 13.500l8.500 9.500h-8.500z" fill="#c81414" stroke="#5a0d0d" />
      </>
    ),
  },
  {
    id: "part",
    art: (
      <>
        <path d="M1 3v7c2 2 7 2 9 0V3" fill="#cf86c4" stroke="#7d2f74" />
        <ellipse cx="5.500" cy="3" rx="4.500" ry="2" fill="#eec5e8" stroke="#7d2f74" />
        <path d="M5.500 14v10M6 18.500h5M13 9.500h9" stroke="#16205c" strokeWidth="1.300" />
        <circle cx="16.500" cy="18.500" r="4.500" stroke="#862f74" strokeWidth="1.200" />
        <circle cx="16.500" cy="18.500" r="1.500" stroke="#862f74" strokeWidth="1.200" />
      </>
    ),
  },
  {
    id: "operation",
    active: true,
    art: (
      <>
        <path d="M3 1h4v9l-2 2.500L3 10z" fill="#5c94dc" stroke="#2b5aa8" strokeWidth=".8" />
        <path d="M1 8l2 1M10 3h7M8 6h7M8 9l-3 2M8 9h4" stroke="#4d86d8" strokeWidth="1.300" />
        <path d="M5.500 13v11M6 18.500h5M13 10.500h9" stroke="#16205c" strokeWidth="1.300" />
        <path d="M13.500 15.500h3v3l3 1.500v2h-6z" stroke="#3c6cb4" strokeWidth="1.300" />
      </>
    ),
  },
  {
    id: "tool",
    art: (
      <>
        <path d="M1 5l16-4.500" stroke="#6a3fa8" strokeWidth="1.500" />
        <path d="M2 6v14l8-3M6 5v13M10 4v9M14 3v7M17 1v9M2 10l15-5M2 15l9-3" stroke="#e09a78" strokeWidth="1.100" />
        <path d="M8 14l9-4 7 4-7 4z" fill="#f6a53c" />
        <path d="M8 14l9 4v6l-9-4z" fill="#4a8ae0" />
        <path d="M17 18l7-4v5l-7 5z" fill="#2058b8" />
        <path d="M11 16.500l3 1.300" stroke="#123" strokeWidth="1.500" />
      </>
    ),
  },
  {
    id: "machine",
    art: (
      <>
        <path d="M7 7c1-5 5-6 9-5" stroke="#e8774a" strokeWidth="1.700" />
        <path d="M14.500 3l4-2 4 1v4l-4 2-4-2z" fill="#fbdcb8" stroke="#e0602a" strokeWidth="1.100" />
        <path d="M1.500 7.500h14v14l-14-1z" fill="#dedede" stroke="#666" />
        <path d="M5 9.500h4v9H5z" fill="#b4c8d6" stroke="#444" />
        <path d="M11 9v10M13.500 9v10" stroke="#777" />
        <path d="M17 14h5l-1 4-4 2 1 3h5" stroke="#666" strokeWidth="1.500" />
        <path d="M1 22l12 1" stroke="#aaa" strokeWidth="2" />
      </>
    ),
  },
  {
    id: "library",
    art: (
      <>
        <path d="M.5 7l5-6 5 0-5 6v16l-5-1z" fill="#f0a848" stroke="#a8641a" strokeWidth=".8" />
        <path d="M6 7l5-6 6 0-5 6v15l-6 1z" fill="#4cc84c" stroke="#1c7d2a" strokeWidth=".8" />
        <path d="M12 7l5-6 6.500 0v15L19 22l-7 0z" fill="#3c9af0" stroke="#1b559e" strokeWidth=".8" />
        <path d="M1 6.500l4-5h5l-4.500 5zM7 6.500l4-5h5l-4.500 5zM13 6.500l4-5h6l-4.500 5z" fill="#fff" opacity=".65" />
        <path d="M12 7h6.500L23 2M18.500 7v15M13 12h5M13 17h5M1 12h4M7 12h4M7 17h4M1 17h4" stroke="#1f4f88" strokeWidth=".6" />
      </>
    ),
  },
  {
    id: "web",
    gap: "mt-[12px]",
    art: (
      <>
        <path d="M9 5c6 0 9 4 10 9M8 1.500C16 1 22 6 23 14" stroke="#4c70bc" strokeWidth="2" />
        <circle cx="8" cy="15.500" r="7.700" fill="#2a7de0" stroke="#174a9c" strokeWidth=".7" />
        <path d="M2 13a6.500 5 0 0112 0c-4-2-8-2-12 0z" fill="#9cc8f8" opacity=".6" />
        <path d="M8 10v2M6 14.200h2.200v5M5.800 20h5" stroke="#fff" strokeWidth="2" />
      </>
    ),
  },
  {
    id: "page",
    gap: "mt-[12px]",
    art: (
      <>
        <path d="M3.500 1h11.500l6 6v16H3.500z" fill="#fff" stroke="#4a78c0" strokeWidth="1.200" />
        <path d="M15 1v6h6" fill="#dfe9f8" stroke="#4a78c0" />
        <circle cx="12" cy="14.500" r="5.800" fill="#3f9558" />
        <path d="M9 15c1-4 3-5 4-4s0 3 2 4-1 4-3 4-3-1-3-4z" fill="#8cc8ee" />
      </>
    ),
  },
  {
    id: "history",
    gap: "mt-[12px]",
    art: (
      <>
        <circle cx="12" cy="12" r="10.500" fill="#dfe9f7" stroke="#777" strokeWidth="1.700" />
        <circle cx="12" cy="12" r="8" stroke="#557" strokeDasharray=".8 3.400" />
        <path d="M12 4.500V12h6" stroke="#223" strokeWidth="1.600" />
      </>
    ),
  },
  {
    id: "color",
    art: (
      <>
        <path d="M2 1h8v22H2z" fill="url(#rainbow)" />
        <path d="M7 5l3 4-2-7 4 3 1 4z" fill="#fff" />
        <circle cx="11" cy="6" r="3.500" fill="#fff" opacity=".7" />
        <path d="M12.500 9l7.500 12" stroke="#111" strokeWidth="2.800" />
      </>
    ),
  },
  {
    id: "wizard",
    art: (
      <>
        <path d="M3 2h6v17H3z" fill="#5c98e4" />
        <path d="M3 6l6-2M3 10l6-2M3 14l6-2" stroke="#2f66b8" />
        <path d="M1 16h9l10-9M15 5h8M13 8h8M1 14l4 4" stroke="#3f78cc" strokeWidth="1.300" />
        <path d="M1 22l3-3 2 2 3-2" stroke="#e8c84a" strokeWidth="1.400" />
        <circle cx="11" cy="6" r="4" fill="#fff" opacity=".75" />
        <path d="M12.500 9l7.500 12" stroke="#111" strokeWidth="2.600" />
      </>
    ),
  },
  {
    id: "robot",
    art: (
      <>
        <path d="M9 2l5-1 6 1.500-1 3.500-4-2M11 6l3-3M13 4L8 12M10 3l5 2-4 8M2 12l6 5M2 12l3-1 5 3 3 4M8 12l-1 5" stroke="#55556a" strokeWidth="1.300" />
        <path d="M4 18l7-2 7 3-5 3H4z" fill="#888" />
        <path d="M2 18c2-2 5-2 6 0l-1 4H2z" fill="#f2a23a" />
      </>
    ),
  },
  {
    id: "gallery",
    art: (
      <>
        <path d="M1 4l6-2v17l-6 2z" fill="#eee" stroke="#777" />
        <path d="M8 2h14v17H8z" fill="#fff" stroke="#668" strokeWidth="1.200" />
        <path d="M10 4h10v10H10z" fill="#c0282e" />
        <path d="M12 4h6l-1 6h-4z" fill="#9cc0f0" />
        <path d="M12 14l3-4 3 4z" fill="#fbe4d8" />
      </>
    ),
  },
  {
    id: "roles",
    art: (
      <>
        <path d="M1 4l6-2v17l-6 2z" fill="#eee" stroke="#777" />
        <path d="M8 2h14v17H8z" fill="#fff" stroke="#668" strokeWidth="1.200" />
        <circle cx="11.500" cy="6" r="2" fill="#2f6fd0" />
        <circle cx="11.500" cy="10.500" r="2" fill="#3a4" />
        <circle cx="11.500" cy="15" r="2" fill="#c33" />
        <path d="M15 6h5M15 10.500h5M15 15h5" stroke="#555" />
      </>
    ),
  },
  {
    id: "connect",
    art: (
      <>
        <circle cx="17.500" cy="5.500" r="5" fill="#4cb938" />
        <circle cx="16" cy="4" r="1.600" fill="#b4eca4" />
        <path d="M17.500 10v7.500H9" stroke="#111" strokeDasharray="2.500 1" strokeWidth="1.200" />
        <path d="M11 14.500l-3.500 3 3.500 3z" fill="#111" />
        <path d="M1.500 12l2.500-2h3v10l-3 2H1.500z" fill="#5fd35a" stroke="#222" strokeWidth="1.100" />
      </>
    ),
  },
];

const ResourceBar = () => (
  <div className="flex w-8 shrink-0 flex-col border-r border-[#a9a9a9] bg-[#dcdcdc]">
    <svg width="0" height="0" className="absolute">
      <linearGradient id="rainbow" x1="0" y1="0" x2="0" y2="1">
        <stop offset="0" stopColor="#e0281c" />
        <stop offset=".3" stopColor="#ffe51f" />
        <stop offset=".6" stopColor="#35e04a" />
        <stop offset=".8" stopColor="#1fc8f0" />
        <stop offset="1" stopColor="#1a2fd0" />
      </linearGradient>
    </svg>
    <div className="flex h-[42px] justify-center pr-[2px] pt-[6px]">
      <Svg w={14} h={14}>
        <circle cx="7" cy="7" r="4.700" stroke="#333" strokeWidth="1.300" />
        <circle cx="7" cy="7" r="6" stroke="#333" strokeWidth="1.600" strokeDasharray="1.500 3.210" />
        <circle cx="7" cy="7" r=".8" fill="#333" />
      </Svg>
    </div>
    {sideIcons.map((s) => (
      <div
        key={s.id}
        className={`flex h-[42px] shrink-0 items-center ${s.gap ?? ""} ${
          s.active
            ? "relative z-10 -mr-px ml-[2px] shadow-[0_-1px_0_#a9a9a9,0_1px_0_#a9a9a9] border-l border-[#a9a9a9] bg-white pl-[3px]"
            : "pl-[6px]"
        }`}
      >
        <Svg w={24} h={24}>
          {s.art}
        </Svg>
      </div>
    ))}
  </div>
);

/* ---------- navigator panel ---------- */

const Cells = () => (
  <>
    <div className="w-[38px] border-r border-[#e8e8e8]" />
    <div className="w-[100px] border-r border-[#e8e8e8]" />
    <div className="flex-1" />
  </>
);

const treeRows: ReactNode[] = [
  <span className="pl-[3px] pt-[2px] tracking-[0.1px]">GEOMETRY</span>,
  <>
    <Svg w={20} h={24}>
      <path d="M9.500 24V12.500H19" stroke="#999" strokeDasharray="1 1" />
    </Svg>
    <Svg w={15} h={14}>
      <path d="M.5 2.500l1-2h4l1 2h8v11H.5z" fill="#f8e9a0" stroke="#7a6a2a" />
      <path d="M7 5h5v7H7M8 8.500h4" stroke="#26268c" strokeWidth="1.400" />
    </Svg>
    <span className="pl-[3px] pt-px text-[15px]">未用项</span>
  </>,
  <>
    <Svg w={20} h={24}>
      <path d="M9.500 0v7M15 12.500h5" stroke="#999" strokeDasharray="1 1" />
      <path d="M4.500 7.500h10v10h-10z" fill="#fff" stroke="#d0d0d0" />
      <path d="M6 12.500h7" stroke="#111" strokeWidth="1.300" />
    </Svg>
    <Svg w={16} h={17}>
      <path d="M2.500 12V2M.5 4l2-3 2 3" stroke="#1c2c9c" strokeWidth="1.300" />
      <path d="M2.500 12l9-5M9 7h3v2" stroke="#2a8c3a" strokeWidth="1.500" />
      <path d="M1 11l9 3.500" stroke="#c22" strokeWidth="1.900" strokeDasharray="3 1" />
      <path d="M5 1.500h3L5 4.500h3M12 3l1.500 2L15 3M13.500 5v2M11.500 12l3 4M14.500 12l-3 4" stroke="#222" strokeWidth="1" />
    </Svg>
    <span className="pl-[2px] pt-[2px]">MCS_MILL</span>
  </>,
  <>
    <Svg w={39} h={24}>
      <path d="M28.500 0v12.500H38" stroke="#999" strokeDasharray="1 1" />
    </Svg>
    <Svg w={15} h={15}>
      <path d="M.5 5L5 2l3 1 3-2 3.500 2v6L8 14 .5 10.500z" fill="#8fa6ee" stroke="#4355b0" strokeWidth=".8" />
      <path d="M.5 5L7 8l2-1.500V4L14.500 3M7 8v5.500" stroke="#3d52b8" strokeWidth=".9" />
      <path d="M8 8l6-3.500v4.500l-6 4z" fill="#5b76d8" />
    </Svg>
    <span className="pl-[3px] pt-[2px]">WORKPIECE</span>
  </>,
];

const Chevron = () => (
  <Svg w={15} h={12}>
    <path d="M0 0h4l3.500 6.500L11 0h4L9 11H6z" fill="#3583ad" />
  </Svg>
);

const Navigator = () => (
  <div className="flex w-[390px] shrink-0 flex-col border-r border-[#8e9294] bg-white pl-[6px] pr-[9px] text-[15px] text-[#222]">
    <div className="flex h-[31px] items-center justify-between pl-[4px] pr-[7px] pt-px">
      <span>工序导航器 - 几何</span>
      <div className="mt-[3px] h-[13px] w-[14px] border border-t-2 border-[#111]" />
    </div>
    <div className="flex h-[708px] flex-col border border-[#d6d6d6] px-px pt-px">
      <div className="flex h-[24px] shrink-0 border-b border-[#cfcfcf] bg-[#efefef] leading-[24px]">
        <div className="w-[193px] shrink-0 border-r border-[#cfcfcf] pl-[6px]">名称</div>
        <div className="w-[38px] shrink-0 border-r border-[#cfcfcf] pl-[6px]">刀...</div>
        <div className="w-[100px] shrink-0 border-r border-[#cfcfcf] pl-[6px]">刀具</div>
        <div className="flex-1 overflow-hidden whitespace-nowrap pl-[6px]">几何体</div>
      </div>
      <div className="h-[659px] shrink-0 overflow-hidden">
        {Array.from({ length: 28 }, (_, i) => (
          <div key={i} className="flex h-[24px] border-b border-[#e8e8e8] odd:bg-white even:bg-[#f9f9f9]">
            <div className="flex h-[24px] w-[193px] shrink-0 items-center border-r border-black text-[15.5px] tracking-[-0.2px]">
              {treeRows[i]}
            </div>
            <Cells />
          </div>
        ))}
      </div>
      <div className="flex h-[20px] items-center bg-[#ececec] pl-[7px] pr-[8px]">
        <Svg w={5} h={9}>
          <path d="M5 0v9L0 4.500z" fill="#333" />
        </Svg>
        <div className="ml-[10px] flex h-[19px] w-[226px] items-center justify-center gap-[3px] border border-[#8f8f8f] bg-linear-to-b from-[#f3f3f3] via-[#dedede] to-[#cfcfcf]">
          <div className="h-2 w-px bg-[#666]" />
          <div className="h-2 w-px bg-[#666]" />
          <div className="h-2 w-px bg-[#666]" />
        </div>
        <div className="ml-auto flex">
          <Svg w={5} h={9}>
            <path d="M0 0v9l5-4.500z" fill="#333" />
          </Svg>
        </div>
      </div>
    </div>
    <div className="h-[4px] shrink-0 border-y border-[#b4b4b4] bg-[#dedede]" />
    <div className="flex h-[28px] items-center justify-between border-b-2 border-[#cbcbcb] pl-[7px] pr-[6px] pt-[2px] text-[18px] text-[#3583ad]">
      相依性
      <div className="-mt-1 flex">
        <Chevron />
      </div>
    </div>
    <div className="flex h-[27px] items-center justify-between border-b-2 border-[#cbcbcb] pl-[7px] pr-[6px] pt-[2px] text-[18px] text-[#3583ad]">
      细节
      <div className="-mt-1 flex">
        <Chevron />
      </div>
    </div>
  </div>
);

/* ---------- graphics view ---------- */

const Shade = ({ id }: { id: string }) => (
  <linearGradient id={id} x1="0" y1="0" x2="1" y2="0">
    <stop offset="0" stopColor="#8d9da1" />
    <stop offset=".12" stopColor="#99abb0" />
    <stop offset=".28" stopColor="#b8cbd1" />
    <stop offset=".36" stopColor="#c2d6dc" />
    <stop offset=".48" stopColor="#abbdc3" />
    <stop offset=".7" stopColor="#a0b1b6" />
    <stop offset=".87" stopColor="#76858a" />
    <stop offset="1" stopColor="#727e82" />
  </linearGradient>
);

const View = () => (
  <div className="relative flex-1 bg-linear-to-b from-[#b2b4b6] from-0% via-[#e6e8e9] via-75% to-[#e7e9ea]">
    <svg width="1498" height="805" viewBox="422 227 1498 805" fill="none" className="block">
      <defs>
        <Shade id="cyl" />
        <linearGradient id="fillet" x1="0" y1="0" x2=".035" y2="1">
          <stop offset="0" stopColor="#3c4344" />
          <stop offset=".42" stopColor="#3f4647" />
          <stop offset=".7" stopColor="#6e7b7f" />
          <stop offset="1" stopColor="#a9bbc0" />
        </linearGradient>
        <linearGradient id="filletSide" x1="0" y1="0" x2="1" y2="0">
          <stop offset="0" stopColor="#8b9b9f" stopOpacity=".5" />
          <stop offset=".18" stopColor="#8b9b9f" stopOpacity="0" />
          <stop offset=".6" stopColor="#485255" stopOpacity="0" />
          <stop offset=".85" stopColor="#485255" stopOpacity=".5" />
          <stop offset="1" stopColor="#6b777a" stopOpacity=".7" />
        </linearGradient>
        <linearGradient id="low" x1="0" y1="0" x2="1" y2="0">
          <stop offset="0" stopColor="#9db0b5" />
          <stop offset=".2" stopColor="#c6dce2" />
          <stop offset=".35" stopColor="#dcf2f8" />
          <stop offset=".6" stopColor="#bfd3d9" />
          <stop offset=".85" stopColor="#9dafb4" />
          <stop offset="1" stopColor="#7d8c91" />
        </linearGradient>
        <radialGradient id="glow">
          <stop offset="0" stopColor="#f4ffff" />
          <stop offset="1" stopColor="#e4f7fb" stopOpacity="0" />
        </radialGradient>
      </defs>

      {/* sectioned ring */}
      <g
        transform="translate(660 420) scale(.35714 .33333)"
        stroke="#20292b"
        strokeWidth="1"
        className="[&_path]:[vector-effect:non-scaling-stroke]"
      >
        <path d="M93 1046C130 1072 240 1084 580 1082C940 1072 1340 1040 1480 985L107 1028Z" fill="#3e4546" />
        <path d="M52 132L66 121L107 1028L93 1046Z" fill="#6a7679" />
        <path
          d="M469 109L470 120C560 133 720 134 850 120C940 110 1000 100 1040 89L1047 282C1000 298 850 325 620 322C540 320 490 312 474 300Z"
          fill="url(#cyl)"
        />
        <path
          d="M326 375C327 340 360 308 395 304L474 302C490 312 540 320 620 322C850 325 1000 298 1047 282L1130 279C1180 280 1204 320 1206 365C1080 395 900 420 633 424C450 424 370 416 326 408Z"
          fill="url(#fillet)"
        />
        <path
          d="M326 375C327 340 360 308 395 304L474 302C490 312 540 320 620 322C850 325 1000 298 1047 282L1130 279C1180 280 1204 320 1206 365C1080 395 900 420 633 424C450 424 370 416 326 408Z"
          fill="url(#filletSide)"
        />
        <path d="M395 310C440 330 560 335 700 330C850 322 1000 300 1090 283" strokeOpacity=".5" />
        <path
          d="M326 408C370 416 450 424 633 424C900 420 1080 395 1206 365L1220 682C1100 710 850 742 600 742C450 742 370 735 343 728Z"
          fill="url(#cyl)"
        />
        <path
          d="M343 728C370 735 450 742 600 742C850 742 1100 710 1220 682L1220 690C1218 730 1190 765 1135 769L1071 770C1000 795 850 811 630 811C570 810 520 806 500 800L500 791L400 791C370 785 345 755 341 730Z"
          fill="url(#low)"
        />
        <ellipse cx="630" cy="766" rx="130" ry="19" fill="url(#glow)" stroke="none" />
        <path
          d="M500 800C520 806 570 810 630 811C850 811 1000 795 1071 770L1080 998C1000 1020 850 1036 640 1035C560 1034 520 1028 507 1022Z"
          fill="url(#cyl)"
        />
        <path
          d="M66 121L469 109L474 302L395 304C360 308 327 340 326 375L341 730C345 755 370 785 400 791L500 791L507 1016L107 1028Z"
          fill="#bccfd5"
        />
        <path
          d="M1040 89L1440 76L1480 985L1080 998L1071 770L1135 769C1190 765 1218 730 1220 690L1206 365C1204 320 1180 280 1130 279L1047 282Z"
          fill="#bccfd5"
        />
        <path d="M315 112C450 75 700 52 940 50C1100 50 1200 60 1203 76L1194 85" stroke="#4960d6" strokeWidth="2" />

        {/* datum frame */}
        <path d="M754 292V265L762 272L771 292V272" stroke="#2b35b8" strokeWidth="1.600" />
        <g stroke="#cb5a50" strokeWidth="2.600">
          <path d="M755 170L773 545L1110 533" />
          <path d="M765 343L800 326L810 523L775 545M765 343L947 337L958 532" />
          <path d="M812 523L990 519L960 533L773 545" />
        </g>
        <path d="M755 148L748 192L764 192Z" fill="#c8463a" stroke="#b83a30" />
        <path d="M1132 532L1096 524L1098 542Z" fill="#d04a3c" stroke="#b83a30" />
        <path d="M1002 529L1034 536L1002 548Z" fill="#39631c" stroke="#39631c" />
        <ellipse cx="839" cy="510" rx="8" ry="9" fill="#8c2a24" stroke="none" />
        <path d="M815 528L842 512" stroke="#8c2a24" strokeWidth="3" />
      </g>
      <g className="[font-family:'Noto_Sans',sans-serif] text-[12px]">
        <text x="925.500" y="467" fill="#d0675e">Z</text>
        <text x="935" y="496" fill="#1648c4">ZM</text>
        <text x="1022" y="594" fill="#3c8c34">YM</text>
        <text x="939.500" y="589.500" fill="#a8443c">XM</text>
        <text x="959" y="592" fill="#c96a60">X</text>
        <text x="1069" y="602" fill="#d66a60">Y</text>
      </g>

      {/* view triad */}
      <path d="M486 939.500L491 937.500H515.500V958L511 964H486Z" fill="#d9dadb" stroke="#b5b7b8" />
      <path d="M486 940H511V964M511 940L515.500 937.500M491 938V958H515" stroke="#b5b7b8" />
      <path d="M484.500 962V925" stroke="#1a49d0" strokeWidth="2" />
      <path d="M484 922L481 934H487.500Z" fill="#1540c0" />
      <path d="M487 965.500H522" stroke="#2f9440" strokeWidth="2" />
      <path d="M529 964.500L518 961V968Z" fill="#2f8a3a" />
      <circle cx="485.500" cy="966" r="4" fill="#b9bcbe" />
      <path d="M487 965L495 961" stroke="#a8242a" strokeWidth="4.500" />
      <g className="[font-family:'Noto_Sans',sans-serif] text-[12px]">
        <text x="479.500" y="922" fill="#3560d8">Z</text>
        <text x="491" y="965" fill="#d0504c">X</text>
        <text x="530" y="969" fill="#3f9a4a">Y</text>
      </g>
    </svg>
    {/* level meter docked on the screen edge */}
    <div className="absolute right-0 top-[640px] flex h-[60px] w-[10px] flex-col items-center justify-end rounded-l-sm border border-[#31373e] bg-[#4d555e] pb-[4px] pt-[4px]">
      <div className="w-1 flex-1 bg-[#252a31]" />
      <div className="h-[22px] w-1 bg-[repeating-linear-gradient(0deg,#4f9cc4_0_1px,#25384a_1px_2px)]" />
    </div>
  </div>
);

/* ---------- taskbar ---------- */

const TaskButton = ({ cls, children }: { cls: string; children: ReactNode }) => (
  <div
    className={`${cls} relative flex h-[47px] shrink-0 items-center overflow-hidden rounded-[3px] border border-[#4e647c] bg-linear-to-br from-[#cbd8e6] via-[#9fb5cd] via-45% to-[#9bb2cc] shadow-[inset_0_0_0_1px_rgba(255,255,255,0.5)]`}
  >
    {children}
  </div>
);

const Folder = () => (
  <Svg w={32} h={42}>
    <path d="M12 41l14-10v6l-10 5z" fill="#5f7690" opacity=".35" />
    <path d="M13 3h10l1 26 1 4v5l-5 1-8 2z" fill="#efd982" />
    <path d="M13 4l10-1v30l-9 5z" fill="#ecd37a" />
    <path d="M2 1l9 5v35L3 37z" fill="#f9eaa8" stroke="#dcc068" strokeWidth=".8" />
    <path d="M11 6v35" stroke="#cdab48" strokeWidth="1.300" />
    <path d="M20 3l3 0v30l-3 1.500z" fill="#f7e6a0" />
  </Svg>
);

const trayIcons: { id: string; art: ReactNode }[] = [
  {
    id: "bird",
    art: (
      <>
        <path d="M1 11C1 5 7 0 14 1c5 1 7 5 5 9l-7 2 0 7c-6 1-11-2-11-8z" fill="#f4a623" />
        <path d="M11 12.500l9-1.500c0 4-3 7-7 8z" fill="#2f7fd6" />
        <path d="M6 18c2 1.500 5 2 8 1.500L12.500 15z" fill="#d93a2b" />
      </>
    ),
  },
  {
    id: "360",
    art: (
      <>
        <circle cx="10" cy="10" r="9.800" fill="#48a02c" />
        <path d="M1 13C-1 6 4 0 11 .5c3 0 5 1.500 6 3L6 8z" fill="#f0e63a" />
        <circle cx="10.500" cy="10.500" r="7" fill="#e0e440" />
        <path d="M10 6v9M5.500 10.500h9" stroke="#1d5c1a" strokeWidth="2.200" />
      </>
    ),
  },
  {
    id: "coach",
    art: (
      <>
        <path d="M1 20c0-6 4-8 9-8s9 2 9 8z" fill="#4f9088" />
        <circle cx="10" cy="7" r="6" fill="#b4907f" />
        <path d="M4 5c2-5 10-5 12 0l-3-1H7z" fill="#6a5048" />
        <circle cx="8" cy="5" r="1.800" fill="#ddd" />
        <circle cx="12.500" cy="5" r="1.800" fill="#ddd" />
        <path d="M3 11h6v5l-3 1.500-3-1.500z" fill="#eef2f2" />
      </>
    ),
  },
  {
    id: "netdisk",
    art: (
      <>
        <rect width="20" height="20" rx="3" fill="#fff" />
        <g strokeWidth="1.800" stroke="#3a6ee8">
          <circle cx="10" cy="7" r="2.800" />
          <circle cx="6" cy="12" r="2.700" />
          <circle cx="14" cy="12" r="2.700" />
        </g>
        <path d="M7 19h3" stroke="#d33" strokeWidth="1.500" />
      </>
    ),
  },
  {
    id: "bell",
    art: <path d="M10 1c5 1 6 5 6 9l3 5H1l3-5c0-4 1-8 6-9zM7 16h6c-1 4-5 4-6 0z" fill="#3fa9ee" />,
  },
  {
    id: "qq",
    art: (
      <>
        <ellipse cx="9" cy="10" rx="6.500" ry="9" fill="#161616" />
        <path d="M3 18h6l-1 2H3zM2 11l2 4-3 1z" fill="#222" />
        <ellipse cx="8.500" cy="14.500" rx="4.500" ry="4.500" fill="#fff" />
        <path d="M3 9c4 3 8 3 12 0v3c-4 2-8 2-12 0z" fill="#d8262c" />
        <path d="M6 7h6l-3 2z" fill="#f5a623" />
        <circle cx="7" cy="4.500" r="1.300" fill="#fff" />
        <circle cx="11" cy="4.500" r="1.300" fill="#fff" />
        <circle cx="14" cy="14" r="5.500" fill="#f09a6a" />
        <path d="M11 12.500h6M11 15.500h6" stroke="#fff" strokeWidth="1.300" />
      </>
    ),
  },
  {
    id: "shield",
    art: (
      <>
        <path d="M10 0c3 2 6 2 9 2 0 8-2 14-9 18C3 16 1 10 1 2c3 0 6 0 9-2z" fill="#e6eed8" />
        <path d="M10 2.500c2 1 5 1.500 7 1.500 0 6-2 10-7 13.500C5 14 3 10 3 4c2 0 5-.5 7-1.500z" fill="#5a9a34" />
        <path d="M11.500 5l-5 6h3.500l-1.500 4 5-6h-3.500z" fill="#fff" />
      </>
    ),
  },
  {
    id: "signal",
    art: (
      <>
        <path d="M4 13v4M7 11v6M10 8.500v8.500M13 6v11M16 3v14" stroke="#4a5a6a" strokeWidth="3" />
        <path d="M4 13.500v3M7 11.500v5M10 9v7.500M13 6.500v10M16 3.500v13" stroke="#fff" strokeWidth="1.700" />
        <path d="M14.500 9l4.500 10h-9z" fill="#f6c921" stroke="#9a7a10" strokeWidth=".7" />
        <path d="M14.500 12v4M14.500 17v1.200" stroke="#222" strokeWidth="1.300" />
      </>
    ),
  },
  {
    id: "sound",
    art: (
      <>
        <path d="M1 6h3v8H1zM5 6l4.500-5v18L5 14z" fill="#fff" stroke="#555" strokeWidth=".8" />
        <path d="M12 7c1 2 1 4 0 6M14.500 5c2 3 2 7 0 10M17 3.500c3 4 3 9 0 13" stroke="#fff" strokeWidth="1.100" />
      </>
    ),
  },
];

const Taskbar = () => (
  <div className="relative flex h-12 items-center border-t border-[#2d3c50] bg-linear-to-b from-[#a9bdd3] from-0% via-[#88a4c2] via-8% to-[#8ea9c5] text-[15px] text-white">
    <div className="ml-[11px] flex">
      <Svg w={43} h={43}>
        <defs>
          <radialGradient id="orb" cx=".5" cy=".95" r=".9">
            <stop offset="0" stopColor="#37d3f5" />
            <stop offset=".45" stopColor="#1b6b9e" />
            <stop offset="1" stopColor="#8aa9be" />
          </radialGradient>
        </defs>
        <circle cx="21.500" cy="21.500" r="20.500" fill="url(#orb)" stroke="#1c4e6e" strokeWidth="1.200" />
        <path d="M3 19c4-20 33-20 37 0-12-5-25-5-37 0z" fill="#fff" opacity=".25" />
        <path d="M13 11c3-3 6-3 9-1l-2 10c-3-2-6-2-9.500 0z" fill="#e8562a" />
        <path d="M23.500 11c3 2 6 2 9.500 0l-2.500 10c-3 2-6 2-9 0z" fill="#8cc63c" />
        <path d="M10 21.500c3-2 6-2 9.500 0l-2.500 10c-3-2-6-2-9 0z" fill="#3f9be0" />
        <path d="M21 22.500c3 2 6 2 9.500 0L28 32c-3 2-6 2-9.500 0z" fill="#fcc93a" />
      </Svg>
    </div>
    <div className="ml-[31px] flex">
      <Svg w={38} h={38}>
        <path d="M17 2v11c0 3-1 4-4 5H3C-1 9 7 0 17 2z" fill="#8ccf2c" stroke="#5a8c1a" />
        <path d="M20 9c0-8 12-11 17-3 1 5-3 12-9 12h-5c-3-2-3-5-3-9z" fill="#4a94e8" stroke="#2a62b0" />
        <path d="M2 21h11c4 0 5 3 5 7-1 9-11 11-16 5-3-5-2-9 0-12z" fill="#f7b42c" stroke="#b87a14" />
        <path d="M21 25c0-3 2-4 5-4h10c3 8-4 17-14 15-2-3-1-7-1-11z" fill="#e65a50" stroke="#a03028" />
      </Svg>
    </div>
    <TaskButton cls="ml-[21px] w-[159px]">
      <div className="ml-[9px] flex">
        <Svg w={41} h={44}>
          <circle cx="20" cy="21" r="15" stroke="#2f93ea" strokeWidth="9" />
          <path d="M7 28.500A15 15 0 0020 36" stroke="#5fb8f2" strokeWidth="9" />
          <path d="M19 43c-4-2-3-8 2-8 1-6 9-8 13-2 6 0 8 8 3 10z" fill="#fff" />
        </Svg>
      </div>
      <span className="whitespace-nowrap">【新提醒】...</span>
    </TaskButton>
    <div className="ml-[17px] flex">
      <Svg w={40} h={40}>
        <path d="M0 0h40v40H0z" fill="#c41c1e" />
        {[0, 90, 180, 270].map((r) => (
          <g key={r} transform={`rotate(${r} 20 20)`}>
            <path d="M15.500 0v6H11l9 8 9-8h-4.500V0" stroke="#4a1216" strokeWidth="2" />
            <path d="M16 0v6.500h-3.500L20 13l7.500-6.500H24V0z" fill="#d42426" />
            <path d="M5 0v5l8 8M0 5" stroke="#a8a0ac" strokeWidth="1.300" />
            <path d="M35 0v5l-8 8" stroke="#a8a0ac" strokeWidth="1.300" />
          </g>
        ))}
        <circle cx="20" cy="20" r="6.500" fill="#d42426" stroke="#4a1216" strokeWidth="1.500" />
      </Svg>
    </div>
    <TaskButton cls="ml-[16px] w-[161px]">
      <div className="absolute left-[28px] top-0 h-[47px] w-[46px] bg-linear-to-b from-[#2f5a34]/40 to-[#1f4a22]/90 blur-[4px]" />
      <div className="relative ml-[9px] flex">
        <Svg w={42} h={44}>
          <defs>
            <radialGradient id="globe" cx=".6" cy=".65" r=".6">
              <stop offset="0" stopColor="#6ff0f4" />
              <stop offset=".5" stopColor="#2aa6e6" />
              <stop offset="1" stopColor="#1651b0" />
            </radialGradient>
          </defs>
          <circle cx="18" cy="24" r="16" fill="url(#globe)" />
          <path d="M29 9c8-1 10 5 6 12C29 31 16 38 4 40" stroke="#f3a52c" strokeWidth="3" />
          <path d="M0 40l9-4-2 7z" fill="#f3a52c" />
          <path d="M2 2l19-1-4 20z" fill="#c01c44" />
          <path d="M5 4l13-1-2 10z" fill="#e65a7c" />
        </Svg>
      </div>
      <span className="relative ml-[3px] whitespace-nowrap">NX 10 - 加...</span>
    </TaskButton>
    <TaskButton cls="ml-[2px] w-[319px]">
      <div className="flex h-full w-[158px] shrink-0 items-center border-r border-[#8298b0]">
        <div className="ml-[9px] flex">
          <Folder />
        </div>
        <span className="ml-[11px] text-[15.5px]">2018.12.27</span>
      </div>
      <div className="ml-[11px] flex">
        <Folder />
      </div>
      <span className="ml-[11px] text-[15.5px]">2018.12.27</span>
    </TaskButton>
    <TaskButton cls="ml-[3px] w-[160px]">
      <div className="ml-[9px] flex">
        <Svg w={40} h={42}>
          <path d="M18 0l16 9v21l-16 11L2 30V9z" fill="#1f6fe0" />
          <path d="M6 14.500h7l4 11 5-11M22 14.500h9L26 24M11 18l5 10 5-9" stroke="#fff" strokeWidth="2" />
          <rect x="21" y="21" width="18" height="20" rx="3" fill="#ef6b6b" />
          <path d="M25 26h8c4 0 4 6 0 6h-4c-3 0-3 5 0 5h1v-2" stroke="#fff" strokeWidth="1.900" />
        </Svg>
      </div>
      <span className="ml-[4px] whitespace-nowrap tracking-[0.1px]">Administra...</span>
    </TaskButton>
    <TaskButton cls="ml-[2px] w-[160px]">
      <div className="ml-[8px] flex">
        <Svg w={40} h={44}>
          <rect y="1" width="40" height="43" rx="8" fill="#fff" />
          <g strokeWidth="4">
            <circle cx="20" cy="14" r="6" stroke="#2f6fe8" />
            <circle cx="11.500" cy="25" r="5.500" stroke="#2f6fe8" />
            <circle cx="28.500" cy="25" r="5.500" stroke="#2a5cd8" />
            <path d="M14 21l3-3" stroke="#e03a3a" />
            <path d="M17 21l7 7" stroke="#2f6fe8" />
          </g>
          <path d="M13 42h7" stroke="#d84a5a" strokeWidth="3" />
          <path d="M20 42h7" stroke="#4a6fe0" strokeWidth="3" />
        </Svg>
      </div>
      <span className="ml-[4px] whitespace-nowrap text-[14.5px]">欢迎使用百...</span>
    </TaskButton>
    <div className="ml-auto flex items-center pt-[2px]">
      <Svg w={20} h={16}>
        <path d="M5 4c2-5 7 1 10-3" stroke="#555" />
        <path d="M.5 4.500h19v10H.5z" fill="#f4f4f4" stroke="#777" />
        <path d="M2 7.500h16M2 10h16M5 12.500h10" stroke="#777" strokeDasharray="2 1" />
      </Svg>
      <div className="ml-[10px] flex pb-[4px]">
        <Svg w={9} h={20}>
          <path d="M3 3V1h5v3H6M.5 3.500h5v3h-5z" stroke="#fff" />
          <path d="M1 16h6l-3 3z" fill="#fff" />
        </Svg>
      </div>
      <div className="ml-[18px] flex gap-[10px]">
        {trayIcons.map((t) => (
          <Svg key={t.id} w={20} h={20}>
            {t.art}
          </Svg>
        ))}
      </div>
    </div>
    <div className="ml-[8px] w-[94px] pt-[1px] text-center text-[15.500px] leading-[22px]">
      <div>12:24</div>
      <div>2018/12/27</div>
    </div>
    <div className="h-[47px] w-[15px] border border-[#5b728c] bg-linear-to-b from-[#c3d1e0] via-[#7f9ab8] to-[#a9bfd8]" />
  </div>
);

const Watermark = () => (
  <div className="pointer-events-none absolute left-[1637px] top-[985px] flex">
    <Svg w={72} h={83}>
      <g opacity=".72">
        <path d="M36 0l15 8c5 6 6 15 5 25L36 18 20 26C16 16 8 13 0 20z" fill="#bfe6fa" />
        <path d="M51 8l21 12v30c-4 5-10 10-17 12l0-26c1-10 1-20-4-28z" fill="#55bdf0" />
        <path d="M0 20c8-8 22-7 36-2L20 28l-2 4C8 37 2 47 0 60z" fill="#8ed2f4" />
        <path d="M0 60c2-12 8-22 16-26v20c2 10 8 20 18 28z" fill="#5db8ea" />
        <path d="M16 54l20 12 19-8 17-10v14L36 83C24 76 18 66 16 54z" fill="#2c96dc" />
        <path d="M36 23l16 9-16 9-16-9z" fill="#7cc9f0" />
        <path d="M20 34l15 9v18l-15-9z" fill="#4aaee6" />
        <path d="M52 34l-15 9v18l15-9z" fill="#69bce8" />
        <path d="M36 18.500l20 12v25L36 67 16 55.500v-25z" stroke="#e9f4fa" strokeWidth="2.500" />
      </g>
    </Svg>
    <div className="ml-[8px] flex w-[200px] flex-col pt-[12px] text-white/50">
      <span className="whitespace-nowrap text-[39px] font-bold leading-[40px] tracking-[1.800px]">3D世界网</span>
      <span className="mt-[9px] whitespace-nowrap text-[13.500px] leading-[14px] tracking-[2.200px] [font-family:'DejaVu_Sans',sans-serif]">
        WWW.3DSJW.COM
      </span>
    </div>
  </div>
);

const App = () => (
  <div className="relative flex h-[1080px] w-[1920px] flex-col overflow-hidden bg-white text-[#1a1a1a] [font-family:'Noto_Sans','Noto_Sans_CJK_SC',sans-serif]">
    <TitleBar />
    <TabBar />
    <Ribbon />
    <Toolbar />
    <PartBar />
    <div className="flex h-[805px]">
      <ResourceBar />
      <Navigator />
      <View />
    </div>
    <Taskbar />
    <Watermark />
  </div>
);

export default App;
